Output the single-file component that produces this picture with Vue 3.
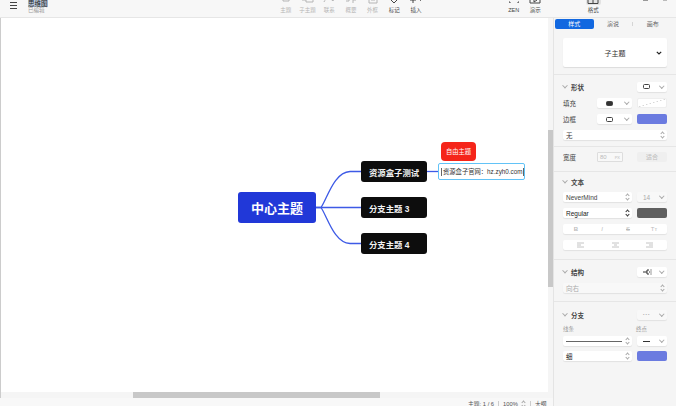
<template>
  <div class="app">
    <header class="topbar">
      <div class="doc">
        <span class="menu"><i></i><i></i><i></i></span>
        <div class="doc-title">
          <strong>思维图</strong>
          <span>已编辑</span>
        </div>
      </div>
      <nav class="tools">
        <div v-for="t in tools" :key="t.label" class="tool" :class="{ dim: t.dim }">
          <svg class="tool-icon" width="14" height="8" viewBox="0 0 14 8" fill="none" stroke="currentColor" stroke-width="1">
            <path :d="t.icon" />
          </svg>
          <span>{{ t.label }}</span>
        </div>
      </nav>
      <nav class="views">
        <div v-for="t in views" :key="t.label" class="tool">
          <svg class="tool-icon" width="14" height="8" viewBox="0 0 14 8" fill="none" stroke="currentColor" stroke-width="1">
            <path :d="t.icon" />
          </svg>
          <span>{{ t.label }}</span>
        </div>
      </nav>
      <div class="format-tool">
        <div class="format-on">
          <svg width="14" height="8" viewBox="0 0 14 8" fill="none" stroke="currentColor" stroke-width="1">
            <path d="M2 0v6.500h10V0M7 0v6.500" />
          </svg>
        </div>
        <span>格式</span>
      </div>
      <div class="win-btns"><i></i><i class="max"></i></div>
    </header>

    <div class="body">
      <div class="work">
        <main class="canvas">
          <div class="map">
            <svg class="links" width="548" height="393" fill="none" stroke="#3d5ae6" stroke-width="1.300">
              <path d="M316 207.500H321C327 199 334 172 350 171.500H361" />
              <path d="M316 207.500H361" />
              <path d="M321 207.500C327 216 334 243 350 243.500H361" />
              <path d="M427 171.500H438" />
            </svg>
            <div class="node root">中心主题</div>
            <div class="node branch b1">资源盒子测试</div>
            <div class="node branch b2">分支主题 3</div>
            <div class="node branch b3">分支主题 4</div>
            <div class="node free">自由主题</div>
            <div class="node editing"><span>资源盒子官网：hz.zyh0.com</span></div>
          </div>
          <div class="vscroll"><div class="vthumb"></div></div>
          <div class="hscroll"><div class="hthumb"></div></div>
        </main>
        <footer class="status">
          <span>主题: 1 / 6</span>
          <i></i>
          <span>100%</span>
          <em class="updown"></em>
          <i></i>
          <span>大纲</span>
        </footer>
      </div>

      <aside class="panel">
        <div class="tabs">
          <span class="tab active">样式</span>
          <span class="tab">演说</span>
          <span class="tab-sep"></span>
          <span class="tab">画布</span>
        </div>

        <div class="topic-card">
          <span>子主题</span>
          <svg class="topic-caret" width="6" height="4" viewBox="0 0 6 4"><path d="M.8.8 3 3 5.200.8" fill="none" stroke="#222" stroke-width="1.200" /></svg>
        </div>

        <section class="sec shape-sec">
          <div class="row head">
            <span class="title"><em></em>形状</span>
            <div class="sel small"><b class="pill"></b><em class="arrow"></em></div>
          </div>
          <div class="row">
            <label>填充</label>
            <div class="sel mid"><b class="pill filled"></b><em class="arrow"></em></div>
            <div class="swatch none"></div>
          </div>
          <div class="row">
            <label>边框</label>
            <div class="sel mid"><b class="pill"></b><em class="arrow"></em></div>
            <div class="swatch blue"></div>
          </div>
          <div class="sel full"><span>无</span><em class="updown"></em></div>
        </section>

        <section class="sec width-sec">
          <div class="row">
            <label>宽度</label>
            <div class="num"><span>80</span><small>PX</small></div>
            <div class="fit">适合</div>
          </div>
        </section>

        <section class="sec text-sec">
          <div class="row head"><span class="title"><em></em>文本</span></div>
          <div class="row">
            <div class="sel wide"><span>NeverMind</span><em class="updown"></em></div>
            <div class="sel small dim"><span>14</span><em class="arrow"></em></div>
          </div>
          <div class="row">
            <div class="sel wide"><span class="dark">Regular</span><em class="updown strong"></em></div>
            <div class="swatch grey"></div>
          </div>
          <div class="btns">
            <span><b>B</b></span><span><i>I</i></span><span><s>S</s></span><span>Tт</span>
          </div>
          <div class="btns aligns">
            <span v-for="a in aligns" :key="a">
              <svg width="9" height="6" viewBox="0 0 9 6" stroke="#c4c4c4" stroke-width="1"><path :d="a" /></svg>
            </span>
          </div>
        </section>

        <section class="sec struct-sec">
          <div class="row head">
            <span class="title"><em></em>结构</span>
            <div class="sel small">
              <svg width="10" height="6" viewBox="0 0 10 6" fill="none" stroke="#333" stroke-width="1"><path d="M0 3h4M6 1H4v4h2M6 3h1M8 .5v1M8 2.500v1M8 4.500v1" /></svg>
              <em class="arrow"></em>
            </div>
          </div>
          <div class="sel full dim"><span>向右</span><em class="updown"></em></div>
        </section>

        <section class="sec branch-sec">
          <div class="row head">
            <span class="title"><em></em>分支</span>
            <div class="sel small dim"><span class="dots">• • •</span><em class="arrow"></em></div>
          </div>
          <div class="row labels"><small>线条</small><small>终点</small></div>
          <div class="row">
            <div class="sel wide"><b class="line"></b><em class="updown"></em></div>
            <div class="sel small"><b class="dash"></b><em class="arrow"></em></div>
          </div>
          <div class="row">
            <div class="sel wide"><span class="dark">细</span><em class="updown"></em></div>
            <div class="swatch blue"></div>
          </div>
        </section>
      </aside>
    </div>
  </div>
</template>

<script setup>
const tools = [
  { label: '主题', dim: true, icon: 'M4 0v4h6V0M2 2h2' },
  { label: '子主题', dim: true, icon: 'M1 3h4M5 1h7v4H5z' },
  { label: '联系', dim: true, icon: 'M2 5C3 1 9 1 11 4l1-2' },
  { label: '概要', dim: true, icon: 'M2 0h3v4H2M9 0v6M9 3h3' },
  { label: '外框', dim: true, icon: 'M3 0v6h8V0M5 3h4' },
  { label: '标记', icon: 'M4 0v3l3 3 3-3V0M3 1h8' },
  { label: '插入', icon: 'M4 0v6M1 3h6M10 2l1.500 1.500L13 2' },
]
const views = [
  { label: 'ZEN', icon: 'M3 0v1H2M11 0v1h1M2 5h1v1M12 5h-1v1' },
  { label: '演示', icon: 'M2 0v6h10V0M6 1l3 2-3 2z' },
]
const aligns = [
  'M1 1h7M1 3h4M1 5h7',
  'M1 1h7M3 3h3M1 5h7',
  'M1 1h7M4 3h4M1 5h7',
]
</script>

<style>
html, body { margin: 0; overflow: hidden; }
</style>

<style scoped>
.app {
  width: 676px;
  height: 406px;
  display: flex;
  flex-direction: column;
  overflow: hidden;
  background: #fff;
  color: #333;
  font-family: "Liberation Sans", "Noto Sans CJK SC", sans-serif;
}

/* top bar, its upper part is cut off in the shot */
.topbar {
  height: 18px;
  flex: none;
  display: flex;
  align-items: flex-end;
  position: relative;
  background: #f7f7f7;
  border-bottom: 1px solid #e6e6e6;
  box-sizing: border-box;
  overflow: hidden;
  font-size: 5.500px;
}
.doc {
  width: 275px;
  display: flex;
  gap: 11px;
  padding-left: 10px;
  box-sizing: border-box;
  align-self: flex-start;
}
.menu { display: flex; flex-direction: column; gap: 2px; margin-top: 2px; }
.menu i { width: 7px; height: 1px; background: #444; display: block; }
.doc-title { display: flex; flex-direction: column; line-height: 5px; }
.doc-title strong {
  width: 20px;
  font-size: 6.500px;
  font-weight: 400;
  color: #222;
  line-height: 7px;
  background: #b9c7da;
}
.doc-title span { color: #999; font-size: 5.500px; margin-top: 1px; }
.tools { display: flex; }
.tool {
  width: 21.700px;
  display: flex;
  flex-direction: column;
  align-items: center;
  line-height: 8px;
  padding-bottom: 3px;
  color: #444;
}
.tool.dim { color: #b5b5b5; }
.tool-icon { margin-bottom: 1px; }
.views { display: flex; margin-left: 76px; }
.format-tool {
  display: flex;
  flex-direction: column;
  align-items: center;
  width: 22px;
  margin-left: 36px;
  line-height: 8px;
  padding-bottom: 3px;
  color: #444;
}
.format-on {
  width: 15px;
  height: 8px;
  background: #e3e3e3;
  border-radius: 0 0 2px 2px;
  display: flex;
  justify-content: center;
  margin-bottom: 1px;
}
.win-btns { position: absolute; top: 0; left: 643px; display: flex; gap: 15px; }
.win-btns i { width: 5px; height: 1px; background: #999; }
.win-btns .max { width: 4px; background: #bbb; }

.body { flex: 1; display: flex; min-height: 0; }
.work { width: 553px; flex: none; display: flex; flex-direction: column; }

/* canvas */
.canvas {
  flex: 1;
  position: relative;
  background: #fff;
  border-left: 1px solid #ccc;
  box-sizing: border-box;
  overflow: hidden;
}
.map { position: absolute; left: -1px; top: -18px; width: 548px; height: 393px; }
.links { position: absolute; left: 0; top: 0; }
.node {
  position: absolute;
  display: flex;
  align-items: center;
  box-sizing: border-box;
  white-space: nowrap;
}
.root {
  left: 238px;
  top: 192px;
  width: 78px;
  height: 31px;
  justify-content: center;
  background: #2138d8;
  border-radius: 3px;
  color: #fff;
  font-size: 13px;
  font-weight: 700;
}
.branch {
  left: 361px;
  width: 66px;
  height: 21px;
  padding-left: 8px;
  background: #0d0d0d;
  border-radius: 3px;
  color: #f2f2f2;
  font-size: 8.400px;
  font-weight: 700;
}
.b1 { top: 161px; }
.b2 { top: 197px; }
.b3 { top: 233px; }
.free {
  left: 441px;
  top: 142px;
  width: 35px;
  height: 19px;
  justify-content: center;
  background: #f5251a;
  border-radius: 4px;
  color: #fff;
  font-size: 6.300px;
}
.editing {
  left: 438px;
  top: 163px;
  width: 87px;
  height: 17px;
  padding-left: 2px;
  background: #fff;
  border: 1px solid #62c3f7;
  border-radius: 2px;
  color: #333;
  font-size: 6.300px;
}
.editing span { border-left: 1px solid #666; border-right: 1px solid #666; padding: 0 1px; line-height: 8px; }
.vscroll { position: absolute; right: 0; top: 0; bottom: 5px; width: 5px; background: #f5f5f5; }
.vthumb { margin-top: 112px; height: 157px; background: #c8c8c8; }
.hscroll { position: absolute; left: 0; right: 0; bottom: 0; height: 6px; background: #f5f5f5; }
.hthumb { margin-left: 132px; width: 247px; height: 6px; background: #c8c8c8; }

/* status bar, cut by the window bottom */
.status {
  height: 8px;
  flex: none;
  display: flex;
  align-items: center;
  gap: 4px;
  padding: 3px 0 0 468px;
  box-sizing: border-box;
  background: #f8f8f8;
  font-size: 5.800px;
  color: #555;
  white-space: nowrap;
  overflow: hidden;
}
.status i { width: 1px; height: 5px; background: #ccc; flex: none; }

/* right panel */
.panel {
  flex: 1;
  background: #f5f5f5;
  border-left: 1px solid #e4e4e4;
  box-sizing: border-box;
  font-size: 6.500px;
  color: #444;
  min-width: 0;
}
.tabs {
  display: flex;
  align-items: center;
  height: 10px;
  margin: 1px 4px 0 1px;
  color: #666;
}
.tab { flex: 1; text-align: center; line-height: 10px; font-size: 6px; }
.tab.active { background: #1268e0; color: #fff; border-radius: 2px; }
.tab-sep { width: 1px; height: 4px; background: #d5d5d5; }
.topic-card {
  margin: 9px 9px 0;
  height: 29px;
  display: flex;
  align-items: center;
  justify-content: center;
  position: relative;
  background: #fff;
  border-radius: 2px;
  box-shadow: 0 1px 1px rgba(0, 0, 0, .1);
  color: #333;
  font-size: 7px;
}
.topic-caret { position: absolute; right: 5px; top: 13px; }
.sec {
  padding: 8px 9px 0;
  border-top: 1px solid #e6e6e6;
  display: flex;
  flex-direction: column;
  gap: 6px;
}
.shape-sec { margin-top: 7px; padding-bottom: 6px; padding-top: 7px; }
.width-sec { padding-top: 5px; padding-bottom: 9px; }
.text-sec { padding-top: 6px; padding-bottom: 9px; }
.struct-sec { padding-top: 7px; padding-bottom: 8px; }
.branch-sec { padding-top: 8px; gap: 5px; }
.row { display: flex; align-items: center; height: 10px; position: relative; }
.row label { width: 34px; flex: none; color: #444; }
.row.head { height: 9px; margin-bottom: 1px; }
.text-sec .row.head { height: 8px; margin-bottom: 0; }
.title { display: flex; align-items: center; flex: 1; color: #444; font-weight: 700; font-size: 6.500px; }
.title em {
  width: 3px;
  height: 3px;
  margin-right: 4px;
  border-right: 1px solid #aaa;
  border-bottom: 1px solid #aaa;
  transform: rotate(45deg) translate(-1px, -1px);
}
.sel {
  height: 10px;
  display: flex;
  align-items: center;
  justify-content: space-between;
  padding: 0 3px;
  background: #fff;
  border-radius: 2px;
  box-shadow: 0 1px 1px rgba(0, 0, 0, .08);
  box-sizing: border-box;
  color: #444;
  font-size: 6.500px;
}
.sel.full { width: 104px; }
.sel.wide { width: 69px; margin-right: 5px; }
.sel.mid { width: 35px; margin-right: 5px; padding-left: 9px; }
.sel.small { width: 30px; margin-left: auto; padding-left: 6px; }
.wide + .small { margin-left: 0; }
.sel.dim { background: #f8f8f8; color: #aaa; }
.sel .dark { color: #222; }
.arrow {
  width: 2.500px;
  height: 2.500px;
  margin: -2px 1px 0 0;
  border-right: 1px solid #aaa;
  border-bottom: 1px solid #aaa;
  transform: rotate(45deg);
}
.updown { position: relative; width: 4px; height: 7px; flex: none; }
.updown::before, .updown::after {
  content: "";
  position: absolute;
  left: .5px;
  width: 2px;
  height: 2px;
  border-right: 1px solid #aaa;
  border-bottom: 1px solid #aaa;
  transform: rotate(45deg);
}
.updown::before { top: 3.500px; }
.updown::after { top: .5px; transform: rotate(225deg); }
.updown.strong::before, .updown.strong::after { border-color: #333; }
.pill { width: 7px; height: 5px; border: 1px solid #444; border-radius: 1.500px; box-sizing: border-box; }
.pill.filled { background: #333; }
.swatch { width: 30px; height: 10px; margin-left: auto; border-radius: 2px; box-sizing: border-box; }
.swatch.none {
  background: linear-gradient(to top left, #fff 48%, #ccc 50%, #fff 52%);
  border: 1px solid #eee;
}
.swatch.blue { background: #6b7be0; }
.swatch.grey { background: #5f5f5f; }
.num {
  width: 26px;
  height: 10px;
  margin-right: 14px;
  padding: 0 2px;
  display: flex;
  align-items: center;
  justify-content: space-between;
  background: #f8f8f8;
  border: 1px solid #ddd;
  border-radius: 1px;
  box-sizing: border-box;
  color: #bbb;
  font-size: 6px;
}
.num small { font-size: 4px; }
.fit {
  width: 30px;
  height: 10px;
  line-height: 10px;
  text-align: center;
  background: #efefef;
  border-radius: 2px;
  color: #bbb;
  font-size: 6px;
}
.btns {
  display: flex;
  height: 10px;
  align-items: center;
  background: #fff;
  border-radius: 2px;
  box-shadow: 0 1px 1px rgba(0, 0, 0, .08);
  color: #bbb;
  font-size: 6px;
}
.btns span { flex: 1; display: flex; justify-content: center; }
.labels { justify-content: space-between; height: 6px; color: #999; padding-right: 20px; margin-top: 1px; margin-bottom: -1px; }
.labels small { font-size: 5.500px; }
.line { flex: 1; height: 1px; margin: 0 3px 0 0; background: #666; }
.dash { width: 7px; height: 1px; background: #333; }
.dots { font-size: 4px; letter-spacing: 0; }
</style>
